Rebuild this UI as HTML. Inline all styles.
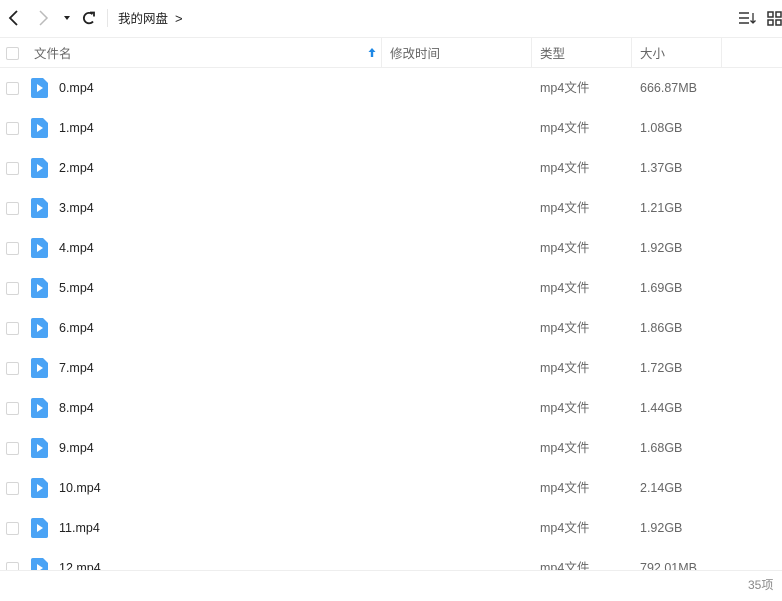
<!DOCTYPE html>
<html><head><meta charset="utf-8"><style>
*{margin:0;padding:0;box-sizing:border-box}
body{width:782px;height:601px;overflow:hidden;background:#fff;font-family:"Liberation Sans","Noto Sans CJK SC",sans-serif;font-size:12px;color:#333;position:relative}
.a{position:absolute}
.cb{position:absolute;left:6px;width:13px;height:13px;border:1px solid #d6d6d6;border-radius:2px;background:#fff}
.row{position:absolute;left:0;width:782px;height:40px}
.row .t{position:absolute;top:0;line-height:40px;font-size:12.5px}
.gray{color:#666}
</style></head><body>
<svg class="a" style="left:0;top:0" width="110" height="36">
<path d="M17 11 L10 18 L17 25" fill="none" stroke="#222" stroke-width="1.8"/>
<path d="M40 11 L47 18 L40 25" fill="none" stroke="#bbb" stroke-width="1.5"/>
<path d="M64 16 L70 16 L67 20 Z" fill="#222"/>
<path d="M92.5 14.2 A5.2 5.2 0 1 0 93 21.5" fill="none" stroke="#222" stroke-width="1.8"/>
<path d="M90 12.5 L94 12.5 L94 16.5" fill="none" stroke="#222" stroke-width="1.8"/>
<line x1="107.5" y1="9" x2="107.5" y2="27" stroke="#e6e6e6"/>
</svg>
<div class="a" style="left:118px;top:8px;font-size:12.5px;color:#222">我的网盘&nbsp;&nbsp;<span style="font-size:13px">&gt;</span></div>
<svg class="a" style="left:735px;top:8px" width="47" height="20">
<path d="M4 5H14M4 10H14M4 15H14" stroke="#333" stroke-width="1.6"/>
<path d="M18 5V15M15.5 12.5L18 15L20.5 12.5" fill="none" stroke="#333" stroke-width="1.3"/>
<rect x="33" y="4" width="5" height="5" fill="none" stroke="#333" stroke-width="1.5"/>
<rect x="41" y="4" width="5" height="5" fill="none" stroke="#333" stroke-width="1.5"/>
<rect x="33" y="12" width="5" height="5" fill="none" stroke="#333" stroke-width="1.5"/>
<rect x="41" y="12" width="5" height="5" fill="none" stroke="#333" stroke-width="1.5"/>
</svg>
<div class="a" style="left:0;top:37px;width:782px;height:1px;background:#eee"></div>
<div class="a" style="left:0;top:67px;width:782px;height:1px;background:#eee"></div>
<div class="cb" style="top:47px"></div>
<div class="a gray" style="left:34px;top:43px;font-size:12.5px">文件名</div>
<svg class="a" style="left:367px;top:47px" width="10" height="12"><path d="M5 1L1.5 5H3.8V10H6.2V5H8.5Z" fill="#1e88e5"/></svg>
<div class="a" style="left:381px;top:38px;width:1px;height:29px;background:#eee"></div>
<div class="a" style="left:531px;top:38px;width:1px;height:29px;background:#eee"></div>
<div class="a" style="left:631px;top:38px;width:1px;height:29px;background:#eee"></div>
<div class="a" style="left:721px;top:38px;width:1px;height:29px;background:#eee"></div>
<div class="a gray" style="left:390px;top:43px;font-size:12.5px">修改时间</div>
<div class="a gray" style="left:540px;top:43px;font-size:12.5px">类型</div>
<div class="a gray" style="left:640px;top:43px;font-size:12.5px">大小</div>
<div class="a" style="left:0;top:68px;width:782px;height:502px;overflow:hidden">
<div id="rows"></div>
</div>
<div class="a" style="left:0;top:570px;width:782px;height:1px;background:#eee"></div>
<div class="a" style="left:748px;top:576px;color:#888;font-size:12px">35项</div>
<script>
var s=["666.87MB","1.08GB","1.37GB","1.21GB","1.92GB","1.69GB","1.86GB","1.72GB","1.44GB","1.68GB","2.14GB","1.92GB","792.01MB"];
var h="";
for(var i=0;i<13;i++){
h+='<div class="row" style="top:'+(i*40)+'px"><div class="cb" style="top:14px"></div>'+
'<svg class="a" style="left:31px;top:10px" width="17" height="20"><path d="M2 0H12L17 5V18Q17 20 15 20H2Q0 20 0 18V2Q0 0 2 0Z" fill="#4aa3f5"/><path d="M6 6L12 10L6 14Z" fill="#fff"/></svg>'+
'<div class="t" style="left:59px;color:#222">'+i+'.mp4</div><div class="t gray" style="left:540px">mp4文件</div><div class="t gray" style="left:640px">'+s[i]+'</div></div>';
}
document.getElementById("rows").innerHTML=h;
</script>
</body></html>
